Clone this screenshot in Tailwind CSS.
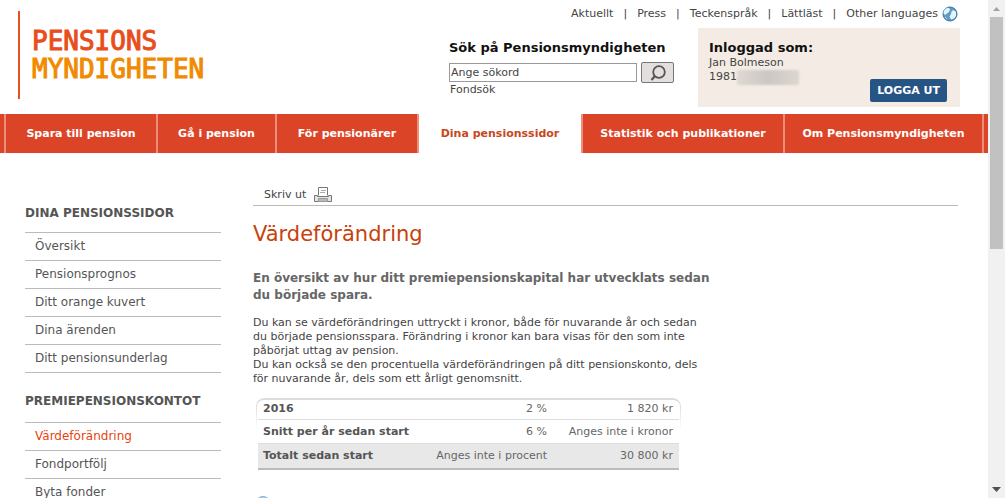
<!DOCTYPE html>
<html lang="sv">
<head>
  <meta charset="UTF-8" />
  <meta name="viewport" content="width=device-width, initial-scale=1.0" />
  <title>Värdeförändring | Pensionsmyndigheten</title>
  <script src="https://cdn.jsdelivr.net/npm/@tailwindcss/browser@4"></script>
</head>
<body class="flex h-screen overflow-hidden bg-white font-['Verdana','DejaVu_Sans',sans-serif] text-[11px] leading-[14px] text-[#444]">

  <div class="min-w-0 flex-1">
    <!-- Header -->
    <header class="flex h-[114px] items-start justify-between pr-7">
      <a href="#" class="mt-[11px] ml-[18px] flex h-[88px] flex-col justify-center border-l-2 border-[#e8501e] pl-3 font-['DejaVu_Sans_Mono',monospace] text-[26px] leading-7 text-[#e84e1b] [-webkit-text-stroke:1px_currentColor]">
        <span>PENSIONS</span>
        <span class="text-[#f18a00]">MYNDIGHETEN</span>
      </a>

      <div class="flex flex-col items-end">
        <nav class="flex h-7 items-center gap-2.5">
          <a href="#">Aktuellt</a><span>|</span>
          <a href="#">Press</a><span>|</span>
          <a href="#">Teckenspråk</a><span>|</span>
          <a href="#">Lättläst</a><span>|</span>
          <a href="#" class="mr-0.5 flex items-center gap-1">Other languages
            <svg class="size-4" viewBox="0 0 16 16">
              <circle cx="8" cy="8" r="7" fill="#5b9cc8" stroke="#3d7298" />
              <path d="M4 2.500C6 1.500 8 2 8 3.500L7 6 5 7.500 3 9 1.500 7.500C1.500 5 2.500 3.500 4 2.500zM9.500 5.500l2-1.500L14 6v4l-2 2.500-3 1-1.500-3L9 8z" fill="#e6f3fb" />
              <path d="M3 11l2 2" stroke="#b4d8ef" />
            </svg>
          </a>
        </nav>

        <div class="flex gap-6">
          <form class="w-[225px] pt-3">
            <label for="search" class="block text-[13px] leading-4 font-bold text-[#111]">Sök på Pensionsmyndigheten</label>
            <div class="mt-1.5 flex items-center gap-1">
              <input id="search" type="text" value="Ange sökord" class="h-[19px] min-w-0 flex-1 border border-[#999] px-px" />
              <button type="button" aria-label="Sök" class="flex h-[21px] w-[33px] items-center justify-center rounded-xs border border-[#777] bg-[#e3dfde]">
                <svg class="size-[18px]" viewBox="0 0 18 18" fill="none" stroke="#555">
                  <circle cx="10" cy="8" r="5.800" stroke-width="1.800" />
                  <path d="M6 12l-3.500 4" stroke-width="2.200" />
                </svg>
              </button>
            </div>
            <a href="#" class="ml-px block">Fondsök</a>
          </form>

          <section class="relative h-[79px] w-[262px] bg-[#f4ece4] px-[11px] pt-3">
            <h2 class="text-[13px] leading-4 font-bold text-[#111]">Inloggad som:</h2>
            <p>Jan Bolmeson</p>
            <p class="flex">1981<span class="h-[15px] w-[62px] bg-linear-to-r from-[#dfd8d3] via-[#cdc7c4] to-[#ddd6d0] blur-[1px]"></span></p>
            <button type="button" class="absolute right-[13px] bottom-[5px] h-[23px] rounded-xs bg-[#265585] px-[7px] font-bold text-white">LOGGA UT</button>
          </section>
        </div>
      </div>
    </header>

    <!-- Main menu -->
    <nav class="flex h-[39px] bg-[#dc4427] pl-1 font-bold text-white">
      <a href="#" class="flex flex-[150] items-center justify-center border-l-2 border-[#ec8e7b] whitespace-nowrap">Spara till pension</a>
      <a href="#" class="flex flex-[117] items-center justify-center border-l-2 border-[#ec8e7b] whitespace-nowrap">Gå i pension</a>
      <a href="#" class="flex flex-[140] items-center justify-center border-x-2 border-[#ec8e7b] whitespace-nowrap">För pensionärer</a>
      <a href="#" class="flex flex-[162] items-center justify-center bg-white whitespace-nowrap text-[#c8481c]">Dina pensionssidor</a>
      <a href="#" class="flex flex-[200] items-center justify-center border-l-2 border-[#ec8e7b] whitespace-nowrap">Statistik och publikationer</a>
      <a href="#" class="mr-1 flex flex-[197] items-center justify-center border-x-2 border-[#ec8e7b] whitespace-nowrap">Om Pensionsmyndigheten</a>
    </nav>

    <div class="flex gap-8 pr-[30px] pl-[25px]">
      <!-- Side menu -->
      <aside class="w-[196px] shrink-0 pt-[52px] text-[12px] leading-4 text-[#555]">
        <h2 class="mb-[11px] font-bold">DINA PENSIONSSIDOR</h2>
        <ul class="mb-5 divide-y divide-[#bbb] border-y border-[#bbb]">
          <li><a href="#" class="block px-2.5 pt-[5px] pb-1.5">Översikt</a></li>
          <li><a href="#" class="block px-2.5 pt-[5px] pb-1.5">Pensionsprognos</a></li>
          <li><a href="#" class="block px-2.5 pt-[5px] pb-1.5">Ditt orange kuvert</a></li>
          <li><a href="#" class="block px-2.5 pt-[5px] pb-1.5">Dina ärenden</a></li>
          <li><a href="#" class="block px-2.5 pt-[5px] pb-1.5">Ditt pensionsunderlag</a></li>
        </ul>
        <h2 class="mb-[13px] font-bold">PREMIEPENSIONSKONTOT</h2>
        <ul class="divide-y divide-[#bbb] border-y border-[#bbb]">
          <li><a href="#" class="block px-2.5 pt-[5px] pb-1.5 text-[#e8430f]">Värdeförändring</a></li>
          <li><a href="#" class="block px-2.5 pt-[5px] pb-1.5">Fondportfölj</a></li>
          <li><a href="#" class="block px-2.5 pt-[5px] pb-1.5">Byta fonder</a></li>
        </ul>
      </aside>

      <!-- Content -->
      <main class="min-w-0 flex-1 pt-8">
        <div class="flex h-[21px] border-b border-[#bbb] pl-[11px]">
          <a href="#" class="flex items-center gap-2">Skriv ut
            <svg class="size-[18px]" viewBox="0 0 18 18" stroke="#777">
              <path d="M4.500 9.500v-8h9v8" fill="#fff" />
              <path d="M7 4.500h5M6 6.500h5" stroke="#aaa" />
              <path d="M.5 9.500h3v1h11v-1h3v6H.5z" fill="#e4e4e4" />
              <path d="M4.500 12.500h9v3h-9z" fill="#bbb" stroke="#999" />
            </svg>
          </a>
        </div>
        <h1 class="mt-3 text-[21px] leading-8 text-[#c8410b]">Värdeförändring</h1>
        <div class="max-w-[470px]">
          <p class="mt-5 text-[12px] leading-[17px] font-bold text-[#666]">En översikt av hur ditt premiepensionskapital har utvecklats sedan<br />du började spara.</p>
          <p class="mt-3">Du kan se värdeförändringen uttryckt i kronor, både för nuvarande år och sedan<br />du började pensionsspara. Förändring i kronor kan bara visas för den som inte<br />påbörjat uttag av pension.</p>
          <p>Du kan också se den procentuella värdeförändringen på ditt pensionskonto, dels<br />för nuvarande år, dels som ett årligt genomsnitt.</p>
        </div>

        <div class="relative mt-3 ml-[3px] w-[425px] px-0.5 pt-0.5">
          <!-- Rounded frame that fades out down the sides -->
          <div class="pointer-events-none absolute inset-x-0 top-0 h-8 rounded-t-lg border-x border-t-2 border-[#ddd] mask-b-from-20%"></div>
          <table class="w-full table-fixed text-right text-[#666]">
            <tbody>
              <tr class="h-[19px] border-b border-[#ddd]">
                <th scope="row" class="w-[165px] pl-[5px] text-left text-[#555]">2016</th>
                <td class="pr-1.5">2 %</td>
                <td class="w-[126px] pr-1.5">1 820 kr</td>
              </tr>
              <tr class="h-6 border-b border-[#ddd]">
                <th scope="row" class="pt-0.5 pl-[5px] text-left text-[#555]">Snitt per år sedan start</th>
                <td class="pt-0.5 pr-1.5">6 %</td>
                <td class="pt-0.5 pr-1.5">Anges inte i kronor</td>
              </tr>
              <tr class="h-[26px] border-b-2 border-[#bbb] bg-[#e8e8e8]">
                <th scope="row" class="pl-[5px] text-left text-[#555]">Totalt sedan start</th>
                <td class="pr-1.5">Anges inte i procent</td>
                <td class="pr-1.5">30 800 kr</td>
              </tr>
            </tbody>
          </table>
        </div>

        <svg class="mt-[26px] ml-0.5 size-4" viewBox="0 0 16 16">
          <circle cx="8" cy="8" r="7.500" fill="#a9d3f0" stroke="#7fb2d8" />
        </svg>
      </main>
    </div>
  </div>

  <!-- Scrollbar -->
  <div class="flex w-[17px] shrink-0 flex-col items-center bg-[#f1f1f1]">
    <svg class="size-[17px]" viewBox="0 0 17 17" fill="#a3a3a3"><path d="M5 11l3.500-4 3.500 4z" /></svg>
    <div class="h-[232px] w-[13px] bg-[#c1c1c1]"></div>
    <svg class="mt-auto size-[17px]" viewBox="0 0 17 17" fill="#505050"><path d="M4 6l4.500 5L13 6z" /></svg>
  </div>

</body>
</html>
